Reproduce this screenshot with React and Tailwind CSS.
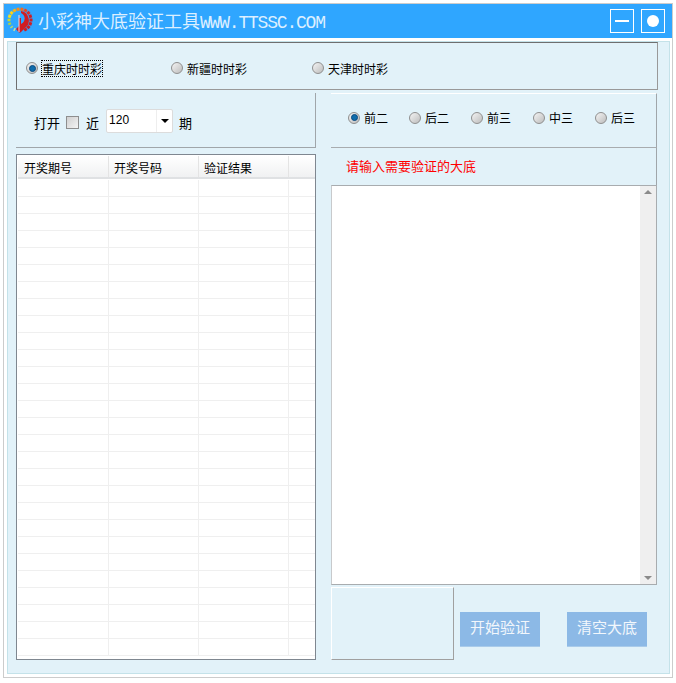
const cjk = "font-['Noto_Sans_CJK_SC',sans-serif]";

function Radio({ checked, label, className = "", focus = false }) {
  return (
    <div className={`flex items-center ${className}`}>
      <span className="flex h-3 w-3 shrink-0 items-center justify-center rounded-full border border-[#8f8f8f] bg-gradient-to-br from-[#f4f4f4] to-[#bdbdbd]">
        {checked && <span className="h-[7px] w-[7px] rounded-full bg-[#0f6cab] border border-[#0a4a80]" />}
      </span>
      <span className={focus ? "ml-[3px] h-[17px] leading-[15px] border border-dotted border-black text-[12px] tracking-normal text-black" : "ml-1 text-[12px] leading-[17px] text-black"}>
        {label}
      </span>
    </div>
  );
}

function Logo() {
  // ticks run clockwise from the lower left, pale green round to red
  const ticks = [
    [120, "#cfe3a0", 1.5], [140, "#b9d86a", 1.5], [160, "#a8d24a", 2], [180, "#c9d92e", 2.5],
    [200, "#f2e01e", 3], [220, "#fbd21a", 3], [240, "#f9b118", 3], [260, "#f78f1a", 3],
    [280, "#f26a1e", 3], [300, "#ea4322", 3], [320, "#dd2a24", 3], [340, "#d01c22", 3],
    [0, "#d01c22", 3], [20, "#d01c22", 3], [40, "#d01c22", 3], [60, "#d01c22", 3],
  ];
  return (
    <svg width="30" height="30" viewBox="0 0 30 30" className="shrink-0">
      {ticks.map(([deg, c, w]) => {
        const a = (deg * Math.PI) / 180;
        return (
          <line
            key={deg}
            x1={16 + 9.5 * Math.cos(a)}
            y1={14 + 9.5 * Math.sin(a)}
            x2={16 + 12.5 * Math.cos(a)}
            y2={14 + 12.5 * Math.sin(a)}
            stroke={c}
            strokeWidth={w}
          />
        );
      })}
      <path d="M17 5 A9.5 9.5 0 0 1 21 22 L16.5 26.5 L15 26.5 L12 23 L15 20 L15 12 L17 12 Z" fill="#d01c22" />
      <path d="M17 7 A6 6 0 0 1 17 18 Z" fill="#2fa6ff" />
      <line x1="15" y1="9" x2="15" y2="26" stroke="#f3d6dc" strokeWidth="1" />
    </svg>
  );
}

const columns = ["w-[91px]", "w-[90px]", "w-[90px]", "flex-1"];

export default function App() {
  const rows = Array.from({ length: 28 });

  return (
    <div className={`h-[683px] w-[676px] bg-white pl-[3px] pt-[3px] ${cjk}`}>
      <div className="flex h-[675px] w-[670px] flex-col border border-[#cccccc]">
        {/* title bar */}
        <div className="flex h-[34px] shrink-0 items-center bg-[#2fa6ff] pr-[7px]">
          <Logo />
          <div className="ml-1 flex items-baseline text-[#dcefff]">
            <span className="text-[18px] leading-none">小彩神大底验证工具</span>
            <span className="font-['Liberation_Mono',monospace] text-[18px] leading-none tracking-[-1.2px]">WWW.TTSSC.COM</span>
          </div>
          <button className="ml-auto flex h-6 w-6 items-center justify-center border border-white">
            <span className="h-[2px] w-[14px] bg-white" />
          </button>
          <button className="ml-[7px] flex h-6 w-6 items-center justify-center border border-white">
            <span className="h-3 w-3 rounded-full bg-white" />
          </button>
        </div>

        <div className="flex-1 bg-white pb-[3px] pl-[3px] pr-[2px] pt-[3px]">
          <div className="flex h-full flex-col border border-[#c4e2e9] bg-[#e2f2f9] pl-2 pr-3 pt-0">
            {/* lottery type */}
            <div className="-mr-[1px] flex h-[48px] shrink-0 items-center border border-b-[#999999] border-l-[#6f6f6f] border-r-[#999999] border-t-[#6f6f6f] pl-[9px] pt-[4px]">
              <Radio checked focus label="重庆时时彩" className="w-[145px]" />
              <Radio label="新疆时时彩" className="w-[141px]" />
              <Radio label="天津时时彩" />
            </div>

            <div className="mt-[3px] flex min-h-0 flex-1 gap-[15px]">
              {/* left column */}
              <div className="flex w-[300px] shrink-0 flex-col">
                <div className="flex h-[55px] shrink-0 items-center border-b border-r border-b-[#a0a6aa] border-r-[#a0a6aa] pl-[18px] pt-[2px] text-[13px] text-black">
                  <span className="mt-[3px]">打开</span>
                  <span className="ml-[6px] mt-[3px] h-[13px] w-[13px] border border-[#8e8e8e] bg-gradient-to-br from-[#d0d0d0] to-[#f4f4f4]" />
                  <span className="ml-[7px] mt-[3px]">近</span>
                  <div className="ml-[7px] flex h-6 w-[67px] items-center rounded-[2px] border border-[#dcdcdc] bg-white">
                    <span className="mb-[3px] flex-1 pl-[2px] font-['Liberation_Sans',sans-serif] text-[12px]">120</span>
                    <span className="flex h-full w-4 items-center justify-center border-l border-[#eeeeee]">
                      <span className="h-0 w-0 border-x-[4px] border-t-[4px] border-x-transparent border-t-black" />
                    </span>
                  </div>
                  <span className="ml-[6px] mt-[3px]">期</span>
                </div>

                {/* results table */}
                <div className="mt-[6px] min-h-0 flex-1 overflow-hidden border border-[#7f8790] bg-white pl-[1px] pt-[1px]">
                  <div className="mb-[1px] flex h-[23px] border-b-2 border-[#dfe1e3] bg-gradient-to-b from-white to-[#f0f1f2] text-[12px] text-black">
                    <div className={`${columns[0]} border-r border-[#e4e4e4] pl-[6px] leading-[24px]`}>开奖期号</div>
                    <div className={`${columns[1]} border-r border-[#e4e4e4] pl-[5px] leading-[24px]`}>开奖号码</div>
                    <div className={`${columns[2]} border-r border-[#e4e4e4] pl-[5px] leading-[24px]`}>验证结果</div>
                    <div className={columns[3]} />
                  </div>
                  {rows.map((_, i) => (
                    <div key={i} className="flex h-[17px] border-b border-[#efefef]">
                      <div className={`${columns[0]} border-r border-[#efefef]`} />
                      <div className={`${columns[1]} border-r border-[#efefef]`} />
                      <div className={`${columns[2]} border-r border-[#efefef]`} />
                      <div className={columns[3]} />
                    </div>
                  ))}
                </div>
              </div>

              {/* right column */}
              <div className="flex min-w-0 flex-1 flex-col">
                <div className="flex h-[55px] shrink-0 items-center border-b border-r border-t border-b-[#a8acaf] border-r-[#a0a6aa] border-t-white pb-[6px] pl-[17px]">
                  <Radio checked label="前二" className="w-[61px]" />
                  <Radio label="后二" className="w-[62px]" />
                  <Radio label="前三" className="w-[62px]" />
                  <Radio label="中三" className="w-[62px]" />
                  <Radio label="后三" />
                </div>
                <div className="flex h-[37px] shrink-0 items-center border-r border-[#a0a6aa] pb-[2px] pl-[15px] text-[13px] text-[#ff0000]">
                  请输入需要验证的大底
                </div>
                <div className="flex h-[400px] shrink-0 border border-b-[#a8acaf] border-l-[#c8cacc] border-r-[#a8acaf] border-t-[#a8acaf] bg-white">
                  <div className="flex-1" />
                  <div className="flex w-[16px] flex-col items-center justify-between bg-[#efefef] py-[4px]">
                    <span className="h-0 w-0 border-x-[4px] border-b-[4px] border-x-transparent border-b-[#8a8a8a]" />
                    <span className="h-0 w-0 border-x-[4px] border-t-[4px] border-x-transparent border-t-[#8a8a8a]" />
                  </div>
                </div>
                <div className="mt-[2px] flex flex-1">
                  <div className="h-[73px] w-[123px] shrink-0 border border-b-[#a0a0a0] border-l-white border-r-[#a0a0a0] border-t-white" />
                  <button className="ml-[6px] mt-[25px] h-[35px] w-[80px] border-b border-[#a9cbea] bg-[#8cb9e6] pb-1 text-[15px] text-[#f2f7fc]">开始验证</button>
                  <button className="ml-[27px] mt-[25px] h-[35px] w-[80px] border-b border-[#a9cbea] bg-[#8cb9e6] pb-1 text-[15px] text-[#f2f7fc]">清空大底</button>
                </div>
              </div>
            </div>
            <div className="h-[13px] shrink-0" />
          </div>
        </div>
      </div>
    </div>
  );
}
